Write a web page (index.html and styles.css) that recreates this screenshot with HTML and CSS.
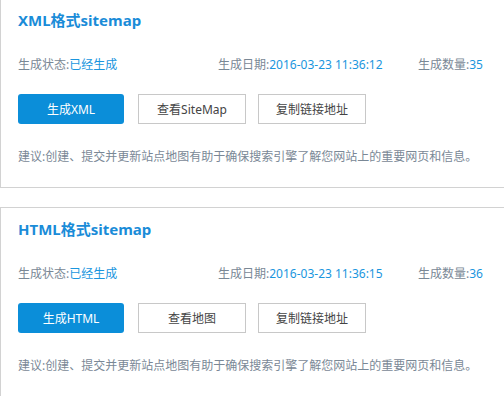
FILE: index.html
```html
<!DOCTYPE html>
<html lang="zh-CN">
<head>
    <meta charset="UTF-8">
    <meta name="viewport" content="width=device-width, initial-scale=1.0">
    <title>站点地图</title>
    <link rel="stylesheet" href="styles.css">
</head>
<body>
    <div class="sitemap-list">
        <!-- XML -->
        <div class="sitemap-box">
            <h2>XML格式sitemap</h2>
            <div class="info-row">
                <div class="info-item">生成状态:<span>已经生成</span></div>
                <div class="info-item">生成日期:<span>2016-03-23 11:36:12</span></div>
                <div class="info-item">生成数量:<span>35</span></div>
            </div>
            <div class="btn-row">
                <button class="btn btn-primary">生成XML</button>
                <button class="btn btn-view">查看SiteMap</button>
                <button class="btn">复制链接地址</button>
            </div>
            <p class="tip">建议:创建、提交并更新站点地图有助于确保搜索引擎了解您网站上的重要网页和信息。</p>
        </div>

        <!-- HTML -->
        <div class="sitemap-box">
            <h2>HTML格式sitemap</h2>
            <div class="info-row">
                <div class="info-item">生成状态:<span>已经生成</span></div>
                <div class="info-item">生成日期:<span>2016-03-23 11:36:15</span></div>
                <div class="info-item">生成数量:<span>36</span></div>
            </div>
            <div class="btn-row">
                <button class="btn btn-primary">生成HTML</button>
                <button class="btn btn-view">查看地图</button>
                <button class="btn">复制链接地址</button>
            </div>
            <p class="tip">建议:创建、提交并更新站点地图有助于确保搜索引擎了解您网站上的重要网页和信息。</p>
        </div>
    </div>
</body>
</html>
```

FILE: styles.css
```css
/* Basic Reset */
* { box-sizing: border-box; margin: 0; padding: 0; }

body {
    font-family: "Noto Sans", "Noto Sans CJK SC", sans-serif;
    font-size: 12px;
    color: #7a8896;
    background: #fff;
    overflow: hidden;
}

.sitemap-list {
    width: 680px;
    margin-top: -2px;
}

/* Panel */
.sitemap-box {
    border: 1px solid #d2d2d2;
    padding: 11px 17px 20px;
    margin-bottom: 19px;
}

.sitemap-box h2 {
    font-size: 15px;
    line-height: 20px;
    font-weight: bold;
    color: #1a8cd8;
}

.info-row {
    display: flex;
    margin-top: 25px;
    line-height: 20px;
}

.info-item {
    width: 200px;
    flex-shrink: 0;
}

.info-item span {
    color: #1a96de;
}

/* Buttons */
.btn-row {
    display: flex;
    margin-top: 19px;
}

.btn {
    height: 30px;
    width: 108px;
    font-family: inherit;
    font-size: 12px;
    color: #444;
    background: #fff;
    border: 1px solid #c8c8c8;
}

.btn-primary {
    width: 106px;
    color: #fff;
    background: #0b8ed9;
    border: none;
    border-radius: 3px;
    margin-right: 14px;
}

.btn-view {
    margin-right: 12px;
}

.tip {
    margin-top: 23px;
    line-height: 20px;
}
```
